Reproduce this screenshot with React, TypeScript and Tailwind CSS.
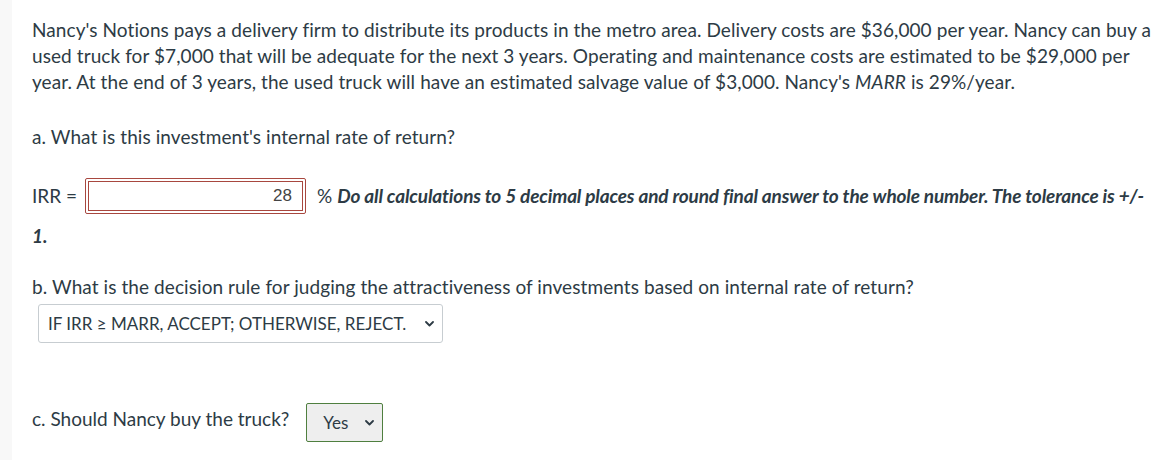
import React from "react";

function Chevron() {
  return (
    <svg width="9" height="6" viewBox="0 0 9 6" className="shrink-0">
      <polyline points="1,1 4.5,4.5 8,1" fill="none" stroke="#2d3b45" strokeWidth="1.8" strokeLinecap="round" strokeLinejoin="round" />
    </svg>
  );
}

export default function App() {
  return (
    <div className="flex min-h-[460px] w-[1166px] bg-white text-[#2d3b45]" style={{ fontFamily: "Lato, 'Noto Sans', sans-serif" }}>
      <div className="w-[12px] shrink-0 bg-[#f8f8f8]" />
      <div className="flex-1 pl-[20px] pr-[6px]">
        <p className="mt-[17px] text-[19px] leading-[26px] tracking-[0.08px]">
          Nancy's Notions pays a delivery firm to distribute its products in the metro area. Delivery costs are $36,000 per year. Nancy can buy a used truck for $7,000 that will be adequate for the next 3 years. Operating and maintenance costs are estimated to be $29,000 per year. At the end of 3 years, the used truck will have an estimated salvage value of $3,000. Nancy's <i>MARR</i> is 29%/year.
        </p>
        <p className="mt-[29px] text-[19px] leading-[26px] tracking-[0.08px]">a. What is this investment's internal rate of return?</p>
        <div className="mt-[28px] flex items-center text-[19px]">
          <span className="mr-[8px]">IRR =</span>
          <div className="flex h-[36px] w-[221px] shrink-0 items-center rounded-[2px] border border-[#a8473f] p-[2px]">
            <div className="flex h-full w-full items-center justify-end border border-[#a8473f] pr-[10px] text-[17px] text-[#444]" style={{ fontFamily: "'Liberation Sans', Arial, sans-serif" }}>
              28
            </div>
          </div>
          <span className="ml-[11px]">%</span>
          <span className="ml-[5px] whitespace-nowrap font-bold italic tracking-[-0.15px]">
            Do all calculations to 5 decimal places and round final answer to the whole number. The tolerance is +/-
          </span>
        </div>
        <div className="mt-[11px] text-[19px] font-bold italic leading-[22px]">1.</div>
        <p className="mt-[27px] text-[19px] leading-[26px] tracking-[0.08px]">
          b. What is the decision rule for judging the attractiveness of investments based on internal rate of return?
        </p>
        <div className="ml-[6px] mt-[4px] flex h-[39px] w-[405px] items-center justify-between rounded-[3px] border border-[#c7cdd1] bg-white pl-[9px] pr-[8px] text-[17px]">
          <span>IF IRR ≥ MARR, ACCEPT; OTHERWISE, REJECT.</span>
          <Chevron />
        </div>
        <div className="mt-[60px] flex items-start">
          <span className="mt-[3px] text-[19px] leading-[26px]">c. Should Nancy buy the truck?</span>
          <div className="ml-[17px] flex h-[39px] w-[77px] items-center justify-between rounded-[2px] border border-[#4f7f3f] bg-[#eeeeee] pl-[16px] pr-[8px] text-[17px]">
            <span>Yes</span>
            <Chevron />
          </div>
        </div>
      </div>
    </div>
  );
}
